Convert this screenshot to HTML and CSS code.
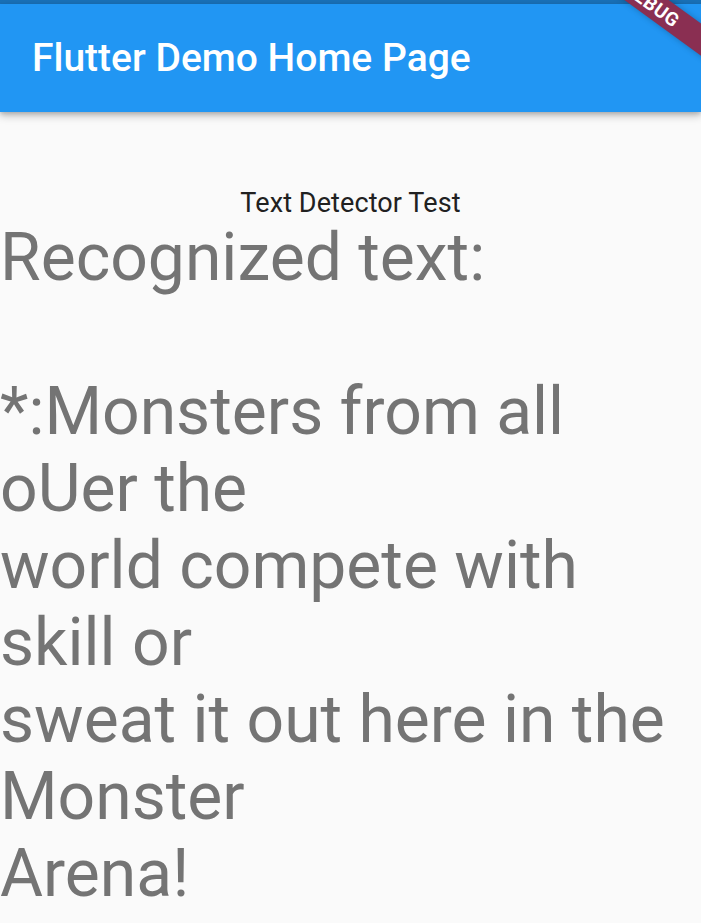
FILE: index.html
```html
<!DOCTYPE html>
<html>
<head>
<meta charset="utf-8">
<link rel="stylesheet" href="styles.css">
</head>
<body>
<div class="screen">
  <div class="status-bar"></div>
  <header class="app-bar">
    <h1 class="app-title">Flutter Demo Home Page</h1>
  </header>
  <main class="content">
    <p class="caption">Text Detector Test</p>
    <p class="result">Recognized text:<br><br>*:Monsters from all<br>oUer the<br>world compete with<br>skill or<br>sweat it out here in the<br>Monster<br>Arena!</p>
  </main>
  <div class="debug-banner"><span>DEBUG</span></div>
</div>
</body>
</html>
```

FILE: styles.css
```css
html, body {
  margin: 0;
  padding: 0;
  background: #fafafa;
}

.screen {
  position: relative;
  width: 701px;
  height: 923px;
  overflow: hidden;
  background: #fafafa;
  font-family: Roboto, "Noto Sans", sans-serif;
}

.status-bar {
  height: 4px;
  background: #1970b6;
}

.app-bar {
  position: relative;
  z-index: 2;
  height: 108px;
  background: #2196f3;
  display: flex;
  align-items: center;
  padding: 0 32px;
  box-shadow: 0 4px 8px rgba(0, 0, 0, 0.22), 0 2px 4px rgba(0, 0, 0, 0.14);
}

.app-title {
  margin: 0;
  color: #ffffff;
  font-size: 39px;
  font-weight: 500;
  line-height: normal;
}

.content {
  display: flex;
  flex-direction: column;
  padding-top: 75px;
}

.caption {
  margin: 0;
  text-align: center;
  font-size: 27px;
  letter-spacing: 0.1px;
  line-height: normal;
  color: #212121;
}

.result {
  margin: 0;
  font-size: 66px;
  line-height: normal;
  color: #747474;
  white-space: nowrap;
}

.debug-banner {
  position: absolute;
  z-index: 5;
  left: 552px;
  top: -9px;
  width: 200px;
  height: 26px;
  background: #8a2f52;
  transform: rotate(36deg);
  display: flex;
  align-items: center;
  justify-content: center;
  box-shadow: 0 0 6px rgba(0, 0, 0, 0.25);
}

.debug-banner span {
  color: #ffffff;
  font-family: Roboto, "Noto Sans", sans-serif;
  font-weight: 700;
  font-size: 19px;
  letter-spacing: 0.5px;
  line-height: 1;
}
```
